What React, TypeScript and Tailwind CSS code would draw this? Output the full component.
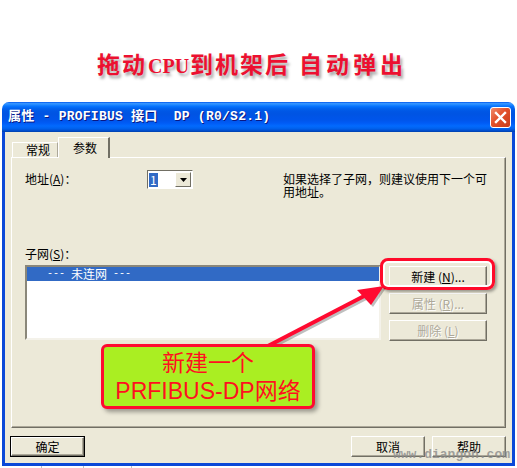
import React from "react";

const ui = "font-['Noto_Sans_CJK_SC',sans-serif] text-[12px] leading-[14px] text-black";

function Btn({
  children,
  className = "",
  disabled = false,
}: {
  children: React.ReactNode;
  className?: string;
  disabled?: boolean;
}) {
  return (
    <div
      className={`flex items-center justify-center bg-[#ece9d8] border border-t-white border-l-white border-r-[#716f64] border-b-[#716f64] shadow-[inset_-1px_-1px_0_#aca899] ${
        disabled ? "text-[#aca899] [text-shadow:1px_1px_0_#ffffff]" : "text-black"
      } ${className}`}
    >
      {children}
    </div>
  );
}

export default function App() {
  return (
    <div className="relative w-[517px] h-[468px] overflow-hidden bg-white">
      {/* heading */}
      <div className="h-[102px] pt-[51px] pl-[97px] flex items-start">
        <div className="flex items-baseline font-['Liberation_Serif','Noto_Sans_CJK_SC',serif] font-bold text-[23px] leading-[30px] text-[#ec1030] tracking-[2px] [text-shadow:2px_3px_3px_rgba(0,0,0,0.35)]">
          <span>拖动</span>
          <span className="text-[20px] tracking-[0px] mx-[1px]">CPU</span>
          <span>到机架后</span>
          <span className="ml-[9px] tracking-[4px]">自动弹出</span>
        </div>
      </div>

      {/* window */}
      <div className="ml-[2px] w-[513px] h-[364px] flex flex-col rounded-t-[7px] overflow-hidden">
        <div className="h-[30px] flex items-center justify-between pl-[6px] pr-[4px] bg-[linear-gradient(to_bottom,#0058ee_0%,#3593ff_5%,#288eff_8%,#127dff_12%,#036ffc_16%,#0262ee_22%,#0057e5_30%,#0054e3_40%,#0055eb_60%,#005bf5_70%,#026afe_80%,#0062ef_88%,#0052d6_94%,#0040ab_100%)]">
          <span className="font-['Liberation_Mono','Noto_Sans_CJK_SC',monospace] font-bold text-[13px] leading-[16px] tracking-[0.25px] text-white whitespace-pre [text-shadow:1px_1px_0_#0a1883]">
            属性 - PROFIBUS 接口  DP (R0/S2.1)
          </span>
          <div className="w-[21px] h-[21px] rounded-[3px] border border-white bg-[linear-gradient(135deg,#f08a6a_0%,#e2502a_45%,#c83c1a_100%)] flex items-center justify-center">
            <svg width="13" height="13" viewBox="0 0 13 13">
              <path d="M2 2 L11 11 M11 2 L2 11" stroke="#ffffff" strokeWidth="2.4" strokeLinecap="square" />
            </svg>
          </div>
        </div>

        <div className={`flex-1 flex flex-col bg-[#ece9d8] border-x-[3px] border-b-[3px] border-[#0a48d8] ${ui}`}>
          {/* tabs */}
          <div className="h-[25px] flex items-end pl-[7px]">
            <div className="h-[15px] w-[46px] flex items-center pl-[13px] border-t border-l border-t-white border-l-white border-r border-r-[#aca899]">
              常规
            </div>
            <div className="relative z-10 -mb-px h-[21px] w-[52px] flex items-start pt-[3px] pl-[14px] bg-[#ece9d8] border-t border-l border-t-white border-l-white border-r-2 border-r-[#716f64]">
              参数
            </div>
          </div>

          {/* tab page */}
          <div className="ml-[6px] w-[495px] h-[271px] border border-t-white border-l-white border-r-[#716f64] border-b-[#716f64] shadow-[inset_-1px_-1px_0_#aca899] pl-[13px] pt-[12px] flex flex-col">
            <div className="flex items-start">
              <div className="w-[122px] mt-[2px]">
                地址(<span className="underline">A</span>)：
              </div>
              <div className="w-[46px] h-[19px] flex bg-white border border-t-[#716f64] border-l-[#716f64] border-r-white border-b-white p-px">
                <div className="flex-1 flex items-center">
                  <span className="bg-[#316ac5] text-white px-[1px] leading-[14px]">1</span>
                </div>
                <div className="w-[16px] h-full flex items-center justify-center bg-[#ece9d8] border border-t-white border-l-white border-r-[#716f64] border-b-[#716f64]">
                  <svg width="7" height="4" viewBox="0 0 7 4">
                    <path d="M0 0 H7 L3.5 4 Z" fill="#000" />
                  </svg>
                </div>
              </div>
              <div className="ml-[90px] mt-[2px] leading-[13px]">
                如果选择了子网，则建议使用下一个可
                <br />
                用地址。
              </div>
            </div>

            <div className="mt-[49px]">
              子网(<span className="underline">S</span>)：
            </div>

            <div className="mt-[4px] flex items-start">
              <div className="w-[356px] h-[75px] bg-white border-2 border-t-[#8a877a] border-l-[#8a877a] border-r-[#f4f2ea] border-b-[#f4f2ea]">
                <div className="h-[14px] flex items-center bg-[#316ac5] text-white pl-[20px] whitespace-pre leading-[14px]">
                  <span className="font-['Liberation_Mono',monospace] text-[10px]">--- </span>
                  <span>未连网</span>
                  <span className="font-['Liberation_Mono',monospace] text-[10px]"> ---</span>
                </div>
              </div>
              <div className="ml-[8px] mt-px flex flex-col gap-[6px]">
                <Btn className="w-[98px] h-[21px]">
                  新建 (<span className="underline">N</span>)...
                </Btn>
                <Btn className="w-[98px] h-[21px]" disabled>
                  属性 (<span className="underline">R</span>)...
                </Btn>
                <Btn className="w-[98px] h-[21px]" disabled>
                  删除 (<span className="underline">L</span>)
                </Btn>
              </div>
            </div>
          </div>

          {/* dialog buttons */}
          <div className="mt-[8px] flex items-start pl-[5px]">
            <div className="border border-black">
              <Btn className="w-[73px] h-[19px]">确定</Btn>
            </div>
            <Btn className="ml-[266px] w-[74px] h-[21px]">取消</Btn>
            <Btn className="ml-[7px] w-[74px] h-[21px]">帮助</Btn>
          </div>
        </div>
      </div>
      <div className="h-[2px] flex">
        <div className="w-[42px] border-r border-[#c0c0c0]" />
        <div className="w-[42px] border-r border-[#c0c0c0]" />
        <div className="w-[48px] border-r border-[#c0c0c0]" />
      </div>

      {/* highlight ring around 新建 */}
      <div className="absolute left-[380px] top-[258px] w-[115px] h-[32px] rounded-[8px] border-[3px] border-[#ff0a2a] shadow-[2px_2px_3px_rgba(0,0,0,0.35),inset_0_0_0_2px_#ffffff]" />

      {/* arrow */}
      <svg className="absolute left-0 top-0 pointer-events-none" width="517" height="468" viewBox="0 0 517 468">
        <line x1="266" y1="347" x2="368" y2="294" stroke="rgba(0,0,0,0.25)" strokeWidth="4" transform="translate(2 2)" />
        <polygon points="384,286 357,290 371,305" fill="rgba(0,0,0,0.25)" transform="translate(2 2)" />
        <line x1="266" y1="347" x2="368" y2="294" stroke="#ff0a30" strokeWidth="4" />
        <polygon points="384,286 357,290 371,305" fill="#ff0a30" />
      </svg>

      {/* callout */}
      <div className="absolute left-[101px] top-[344px] w-[214px] h-[65px] rounded-[6px] border-[3px] border-[#ff0a30] bg-[#aaee22] shadow-[3px_3px_4px_rgba(0,0,0,0.35)] flex flex-col items-center justify-center font-['Liberation_Sans','Noto_Sans_CJK_SC',sans-serif] text-[23px] leading-[28px] text-[#ff1020]">
        <span>新建一个</span>
        <span>PRFIBUS-DP网络</span>
      </div>

      {/* watermark */}
      <div className="absolute left-[393px] top-[448px] font-['Liberation_Mono',monospace] font-bold text-[13px] leading-[14px] text-[#8a8a8a]/80">
        www.diangon.com
      </div>
    </div>
  );
}
